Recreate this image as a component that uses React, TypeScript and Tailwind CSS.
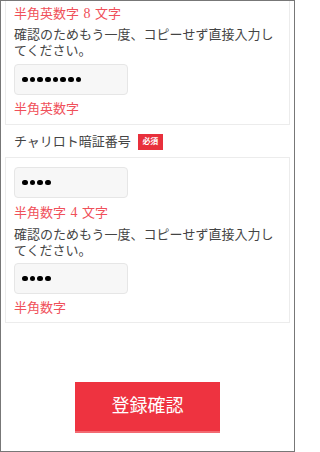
const font = { fontFamily: '"Liberation Serif", "Noto Sans CJK JP", serif' };

function Masked({ count }: { count: number }) {
  return (
    <div className="flex h-[31px] w-[114px] items-center gap-[2.2px] rounded-[4px] border border-[#e6e6e6] bg-[#f7f7f7] pl-[7px]">
      {Array.from({ length: count }).map((_, i) => (
        <span key={i} className="block h-[5.5px] w-[5.5px] rounded-full bg-black" />
      ))}
    </div>
  );
}

function Note() {
  return (
    <p className="text-[13px] leading-[16px] text-[#444]">
      確認のためもう一度、コピーせず直接入力してください。
    </p>
  );
}

function Limit({ kind, n }: { kind: string; n: string }) {
  return (
    <p className="text-[13px] leading-[20px] text-[#f0505a]">
      {kind}
      <span className="inline-block w-[16px] text-center text-[14px]">{n}</span>
      文字
    </p>
  );
}

export default function App() {
  return (
    <div
      className="flex h-[452px] w-[295px] flex-col overflow-hidden border border-[#777] bg-white"
      style={font}
    >
      {/* password (cut off above) */}
      <div className="mx-[4px] border-x border-b border-[#ececec] px-[8px] pb-[5px] pt-[3px]">
        <Limit kind="半角英数字" n="8" />
        <div className="mt-[3px]">
          <Note />
        </div>
        <div className="mt-[5px]">
          <Masked count={8} />
        </div>
        <p className="mt-[4px] text-[13px] leading-[20px] text-[#f0505a]">半角英数字</p>
      </div>

      <div className="flex h-[32px] items-center gap-[7px] pl-[13px] pt-[1px]">
        <span className="text-[13px] text-[#444]">チャリロト暗証番号</span>
        <span className="flex h-[16px] w-[25px] items-center justify-center bg-[#e8303c] text-[8px] font-bold text-white">
          必須
        </span>
      </div>

      <div className="mx-[4px] border border-[#ececec] px-[8px] pb-[4px] pt-[9px]">
        <Masked count={4} />
        <div className="mt-[5px]">
          <Limit kind="半角数字" n="4" />
        </div>
        <div className="mt-[4px]">
          <Note />
        </div>
        <div className="mt-[4px]">
          <Masked count={4} />
        </div>
        <p className="mt-[4px] text-[13px] leading-[20px] text-[#f0505a]">半角数字</p>
      </div>

      <div className="mt-[59px] flex justify-center">
        <button className="h-[51px] w-[145px] border-b-2 border-[#f26a72] bg-[#ee3340] text-[18px] text-white">
          登録確認
        </button>
      </div>
    </div>
  );
}
